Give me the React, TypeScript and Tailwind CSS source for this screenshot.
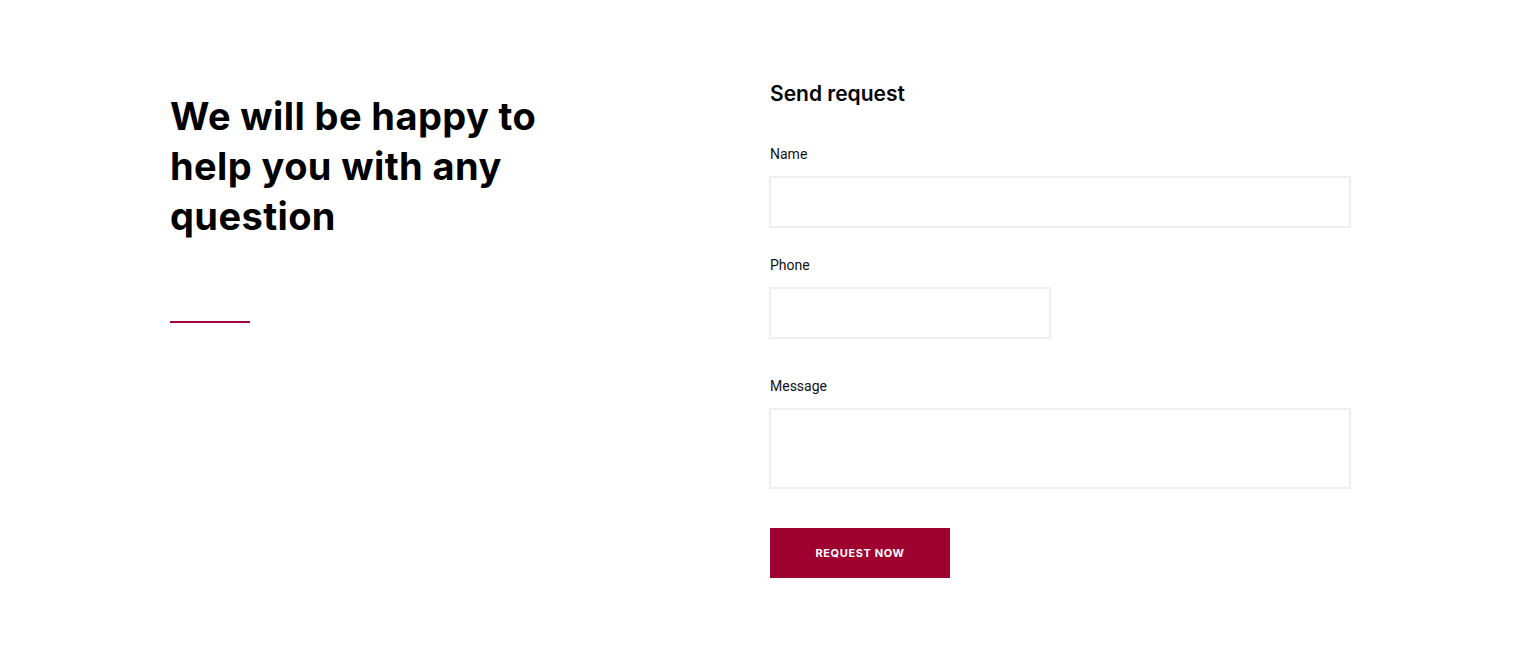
export default function App() {
  return (
    <div className="min-h-[651px] w-full bg-white">
      <div className="mx-auto flex w-[1180px] pt-[79px]">
        <div className="w-[600px] shrink-0 pt-[12px]">
          <h1
            className="w-[400px] text-[38px] font-bold leading-[50px] tracking-[0.4px] text-black"
            style={{ fontFamily: "Inter, 'Noto Sans', sans-serif" }}
          >
            We will be happy to help you with any question
          </h1>
          <div className="mt-[80px] h-[2px] w-[80px] bg-[#a0063a]" />
        </div>
        <div className="w-[580px]" style={{ fontFamily: "Roboto, 'Noto Sans', sans-serif" }}>
          <h2
            className="text-[21px] font-semibold leading-[30px] text-black"
            style={{ fontFamily: "Inter, 'Noto Sans', sans-serif" }}
          >
            Send request
          </h2>
          <form className="mt-[35px] flex flex-col">
            <label className="text-[14px] leading-[20px] text-[#111]">Name</label>
            <input className="-ml-px mt-[12px] h-[52px] w-[582px] border-2 border-[#eeeeee] outline-none" />
            <label className="mt-[27px] text-[14px] leading-[20px] text-[#111]">Phone</label>
            <input className="-ml-px mt-[12px] h-[52px] w-[282px] border-2 border-[#eeeeee] outline-none" />
            <label className="mt-[37px] text-[14px] leading-[20px] text-[#111]">Message</label>
            <textarea className="-ml-px mt-[12px] h-[81px] w-[582px] resize-none border-2 border-[#eeeeee] outline-none" />
            <button
              type="button"
              className="mt-[39px] flex h-[50px] w-[180px] items-center justify-center bg-[#9e0030] text-[11px] font-bold uppercase tracking-[0.6px] text-white"
              style={{ fontFamily: "Inter, 'Noto Sans', sans-serif" }}
            >
              Request now
            </button>
          </form>
        </div>
      </div>
    </div>
  );
}
